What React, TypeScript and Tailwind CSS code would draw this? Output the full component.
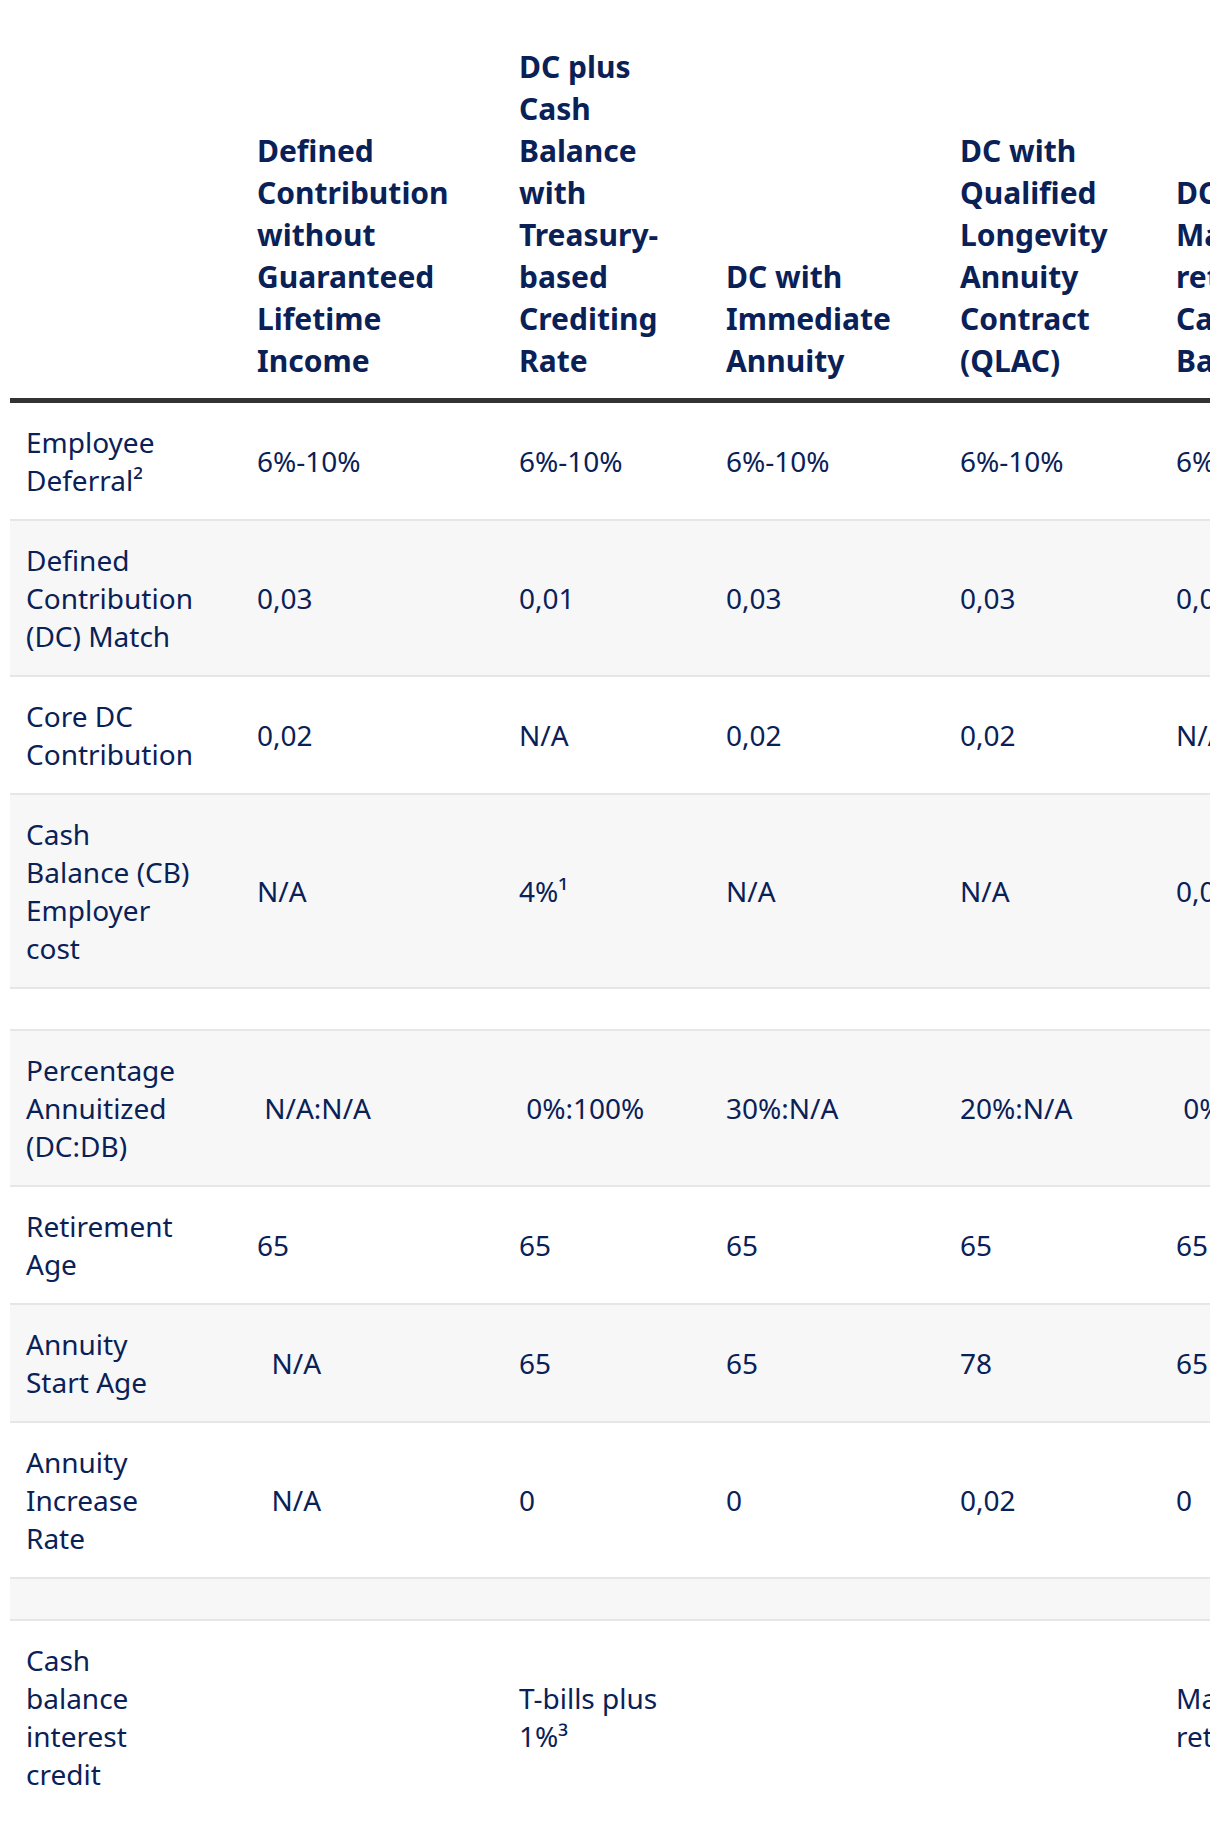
import React from 'react';

const columns = [
  'Defined Contribution without Guaranteed Lifetime Income',
  'DC plus Cash Balance with Treasury-based Crediting Rate',
  'DC with Immediate Annuity',
  'DC with Qualified Longevity Annuity Contract (QLAC)',
  'DC Market return Cash Balance',
];

const nb = '\u00a0';

const rows = [
  { label: 'Employee Deferral²', values: ['6%-10%', '6%-10%', '6%-10%', '6%-10%', '6%-10%'] },
  { label: 'Defined Contribution (DC) Match', values: ['0,03', '0,01', '0,03', '0,03', '0,03'] },
  { label: 'Core DC Contribution', values: ['0,02', 'N/A', '0,02', '0,02', 'N/A'] },
  { label: 'Cash Balance (CB) Employer cost', values: ['N/A', '4%¹', 'N/A', 'N/A', '0,04'] },
  { label: '', values: ['', '', '', '', ''] },
  {
    label: 'Percentage Annuitized (DC:DB)',
    values: [nb + 'N/A:N/A', nb + '0%:100%', '30%:N/A', '20%:N/A', nb + '0%:100%'],
  },
  { label: 'Retirement Age', values: ['65', '65', '65', '65', '65'] },
  { label: 'Annuity Start Age', values: [nb + nb + 'N/A', '65', '65', '78', '65'] },
  { label: 'Annuity Increase Rate', values: [nb + nb + 'N/A', '0', '0', '0,02', '0'] },
  { label: '', values: ['', '', '', '', ''] },
  { label: 'Cash balance interest credit', values: ['', 'T-bills plus 1%³', '', '', 'Market returns'] },
];

const App = () => {
  return (
    <div className="w-full bg-white pt-[30px] px-[10px] font-['Noto_Sans',sans-serif] text-[#0a2157]">
      <div className="overflow-hidden">
        <table className="w-[1330px] table-fixed border-collapse">
          <colgroup>
            <col className="w-[231px]" />
            <col className="w-[262px]" />
            <col className="w-[207px]" />
            <col className="w-[234px]" />
            <col className="w-[216px]" />
            <col className="w-[180px]" />
          </colgroup>
          <thead>
            <tr className="border-b-[5px] border-[#333333]">
              <th className="p-4" />
              {columns.map((col) => (
                <th
                  key={col}
                  className="p-4 text-left align-bottom text-[30px] leading-[42px] font-bold"
                >
                  {col}
                </th>
              ))}
            </tr>
          </thead>
          <tbody>
            {rows.map((row, i) => (
              <tr
                key={i}
                className={`border-b-2 border-[#e6e6e6] last:border-b-0 ${i % 2 === 1 ? 'bg-[#f7f7f7]' : 'bg-white'}`}
              >
                <td className="pl-4 pr-[51px] py-5 align-middle text-[28px] leading-[38px]">{row.label}</td>
                {row.values.map((v, j) => (
                  <td key={j} className="px-4 py-5 align-middle text-[28px] leading-[38px]">
                    {v}
                  </td>
                ))}
              </tr>
            ))}
          </tbody>
        </table>
      </div>
    </div>
  );
};

export default App;
